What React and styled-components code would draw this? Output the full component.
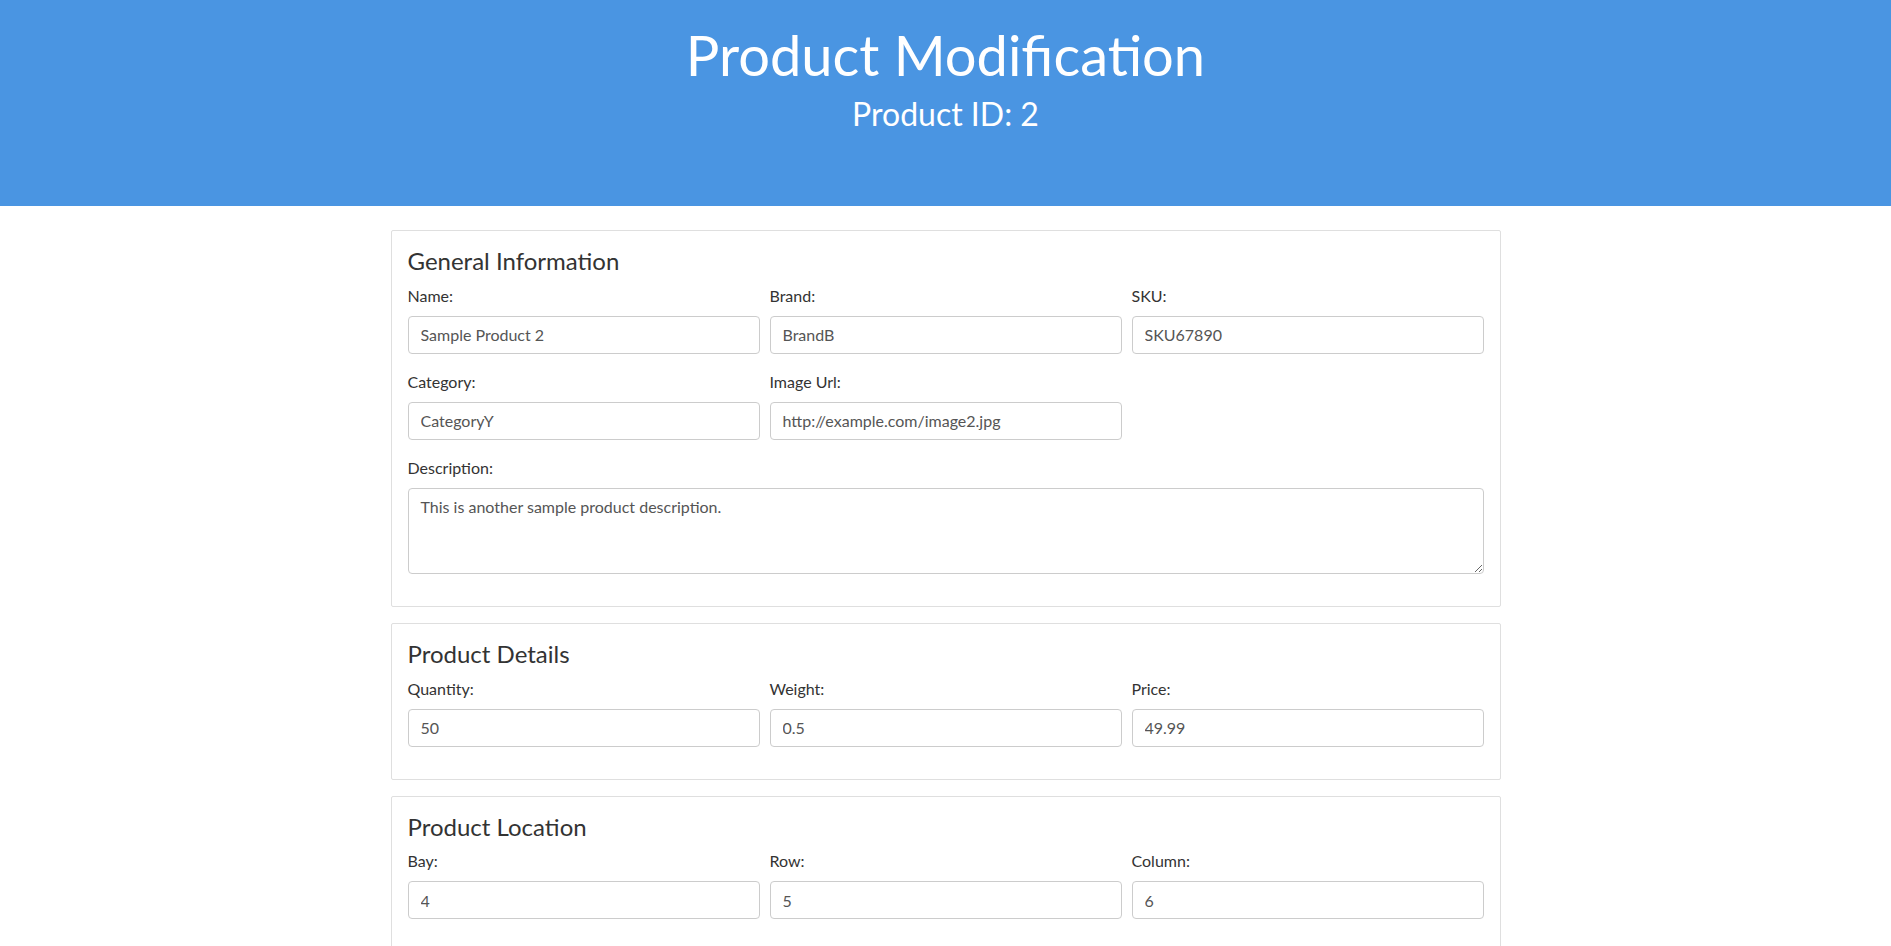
import React from 'react'
import styled, { createGlobalStyle } from 'styled-components'

const GlobalStyle = createGlobalStyle`
  * { box-sizing: border-box; }
  body {
    margin: 0;
    font-family: Lato, "Liberation Sans", sans-serif;
    font-size: 16px;
    line-height: 1.5;
    color: #212529;
    background: #fff;
  }
`

const sections = [
  {
    title: 'General Information',
    rows: [
      [
        { label: 'Name:', value: 'Sample Product 2' },
        { label: 'Brand:', value: 'BrandB' },
        { label: 'SKU:', value: 'SKU67890' },
      ],
      [
        { label: 'Category:', value: 'CategoryY' },
        { label: 'Image Url:', value: 'http://example.com/image2.jpg' },
      ],
    ],
    description: 'This is another sample product description.',
  },
  {
    title: 'Product Details',
    rows: [
      [
        { label: 'Quantity:', value: '50' },
        { label: 'Weight:', value: '0.5' },
        { label: 'Price:', value: '49.99' },
      ],
    ],
  },
  {
    title: 'Product Location',
    rows: [
      [
        { label: 'Bay:', value: '4' },
        { label: 'Row:', value: '5' },
        { label: 'Column:', value: '6' },
      ],
    ],
  },
]

const ProductModification = () => {
  return (
    <Wrapper>
      <GlobalStyle />
      <Header>
        <Title>Product Modification</Title>
        <SubTitle>Product ID: 2</SubTitle>
      </Header>
      <Container>
        {sections.map(section => (
          <Card key={section.title}>
            <CardTitle>{section.title}</CardTitle>
            {section.rows.map((row, i) => (
              <FormRow key={i}>
                {row.map(field => (
                  <FormGroup key={field.label}>
                    <Label>{field.label}</Label>
                    <Input type="text" defaultValue={field.value} />
                  </FormGroup>
                ))}
              </FormRow>
            ))}
            {section.description && (
              <FormGroup>
                <Label>Description:</Label>
                <TextArea rows={3} defaultValue={section.description} />
              </FormGroup>
            )}
          </Card>
        ))}
      </Container>
    </Wrapper>
  )
}

const Wrapper = styled.div`
  min-height: 100vh;
`

const Header = styled.header`
  background: #4a95e2;
  color: #fff;
  text-align: center;
  height: 206px;
  padding-top: 21px;
  margin-bottom: 24px;
`

const Title = styled.h1`
  margin: 0;
  font-size: 56px;
  font-weight: 400;
  line-height: 1.2;
`

const SubTitle = styled.h2`
  margin: 7px 0 0;
  font-size: 32px;
  font-weight: 400;
  line-height: 1.2;
`

const Container = styled.main`
  width: 1110px;
  margin: 0 auto;
`

const Card = styled.section`
  border: 1px solid #dfdfdf;
  border-radius: 2px;
  padding: 16px 16px 16px;
  margin-bottom: 16px;
`

const CardTitle = styled.h4`
  margin: 0 0 8px;
  font-size: 24px;
  font-weight: 400;
  line-height: 1.2;
  color: #333;
`

const FormRow = styled.div`
  display: grid;
  grid-template-columns: repeat(3, 1fr);
  column-gap: 10px;
`

const FormGroup = styled.div`
  margin-bottom: 16px;
`

const Label = styled.label`
  display: block;
  margin-bottom: 8px;
  font-size: 16px;
  color: #333;
`

const Input = styled.input`
  display: block;
  width: 100%;
  height: 38px;
  padding: 6px 12px;
  font-family: inherit;
  font-size: 16px;
  line-height: 1.5;
  color: #555;
  background: #fff;
  border: 1px solid #ccc;
  border-radius: 4px;
  outline: none;
`

const TextArea = styled.textarea`
  display: block;
  width: 100%;
  height: 86px;
  padding: 6px 12px;
  font-family: inherit;
  font-size: 16px;
  line-height: 1.5;
  color: #555;
  border: 1px solid #ccc;
  border-radius: 4px;
  outline: none;
`

export default ProductModification
